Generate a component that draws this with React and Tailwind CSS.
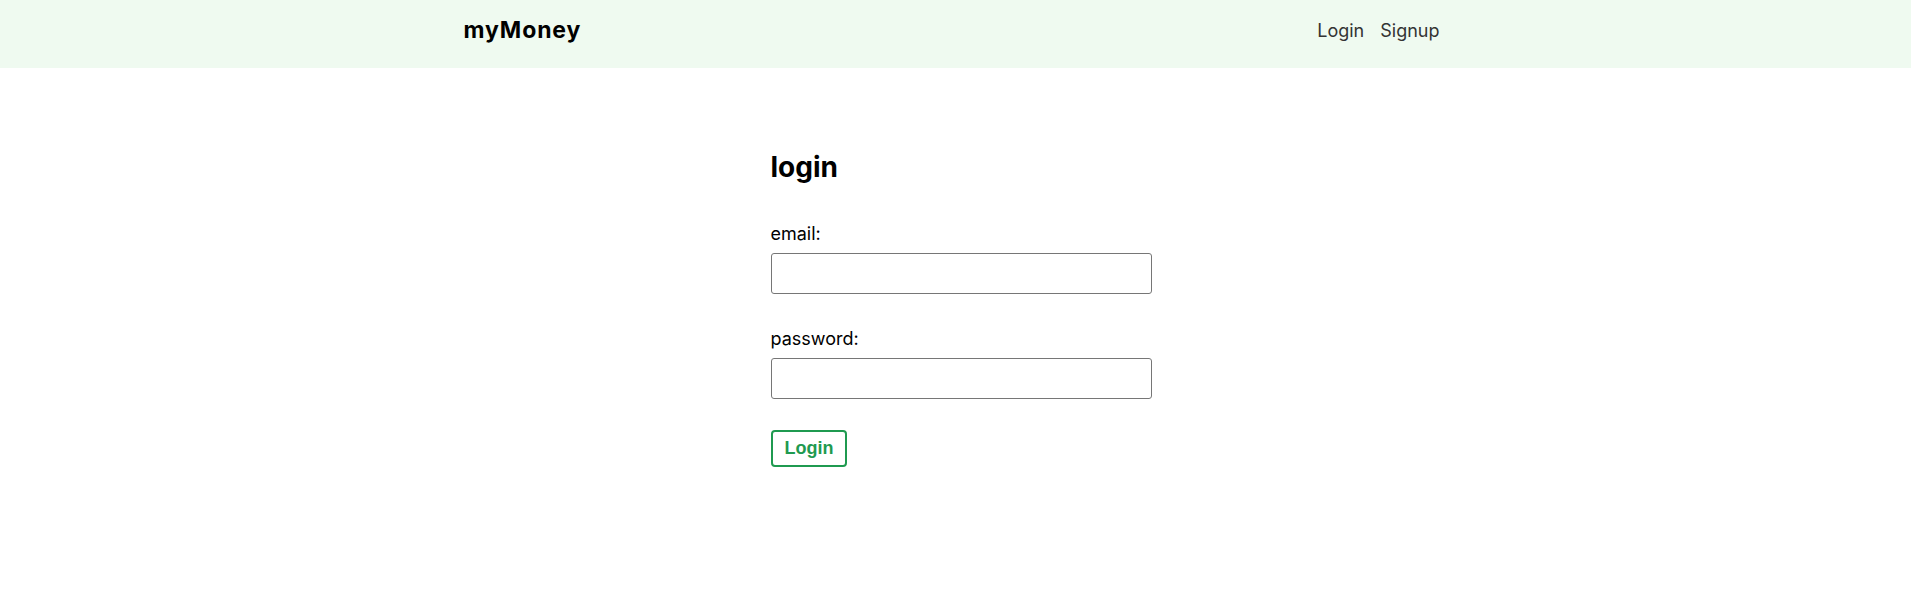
import React, { useState } from 'react';

const Navbar = () => {
  return (
    <nav className="h-[68px] bg-[#effaf0]">
      <div className="w-[984px] h-full mx-auto pr-[8px] pb-[7px] flex items-center justify-between">
        <span className="text-[23px] font-bold tracking-[0.9px] text-black">myMoney</span>
        <ul className="flex items-center gap-[16px] text-[18px] text-[#333]">
          <li>Login</li>
          <li>Signup</li>
        </ul>
      </div>
    </nav>
  );
};

const Login = () => {
  const [email, setEmail] = useState('');
  const [password, setPassword] = useState('');

  const handleSubmit = (e) => {
    e.preventDefault();
  };

  return (
    <form onSubmit={handleSubmit} className="w-[392px] mx-auto pl-[11px] pt-[82px]">
      <h2 className="text-[28px] leading-[34px] font-bold text-black">login</h2>
      <label className="block mt-[38px]">
        <span className="block text-[18px] leading-[24px] text-black">email:</span>
        <input
          type="email"
          value={email}
          onChange={(e) => setEmail(e.target.value)}
          className="block mt-[7px] w-[381px] h-[41px] border border-[#767676] rounded-[3px] px-2"
        />
      </label>
      <label className="block mt-[33px]">
        <span className="block text-[18px] leading-[24px] text-black">password:</span>
        <input
          type="password"
          value={password}
          onChange={(e) => setPassword(e.target.value)}
          className="block mt-[7px] w-[381px] h-[41px] border border-[#767676] rounded-[3px] px-2"
        />
      </label>
      <button
        type="submit"
        className="mt-[31px] h-[37px] px-[12px] border-2 border-[#1f9a50] rounded-[4px] text-[#1f9a50] text-[18px] font-bold bg-white"
        style={{ fontFamily: '"Liberation Sans", Arial, sans-serif' }}
      >
        Login
      </button>
    </form>
  );
};

export default function App() {
  return (
    <div className="min-h-screen bg-white" style={{ fontFamily: 'Inter, "Noto Sans", sans-serif' }}>
      <Navbar />
      <Login />
    </div>
  );
}
